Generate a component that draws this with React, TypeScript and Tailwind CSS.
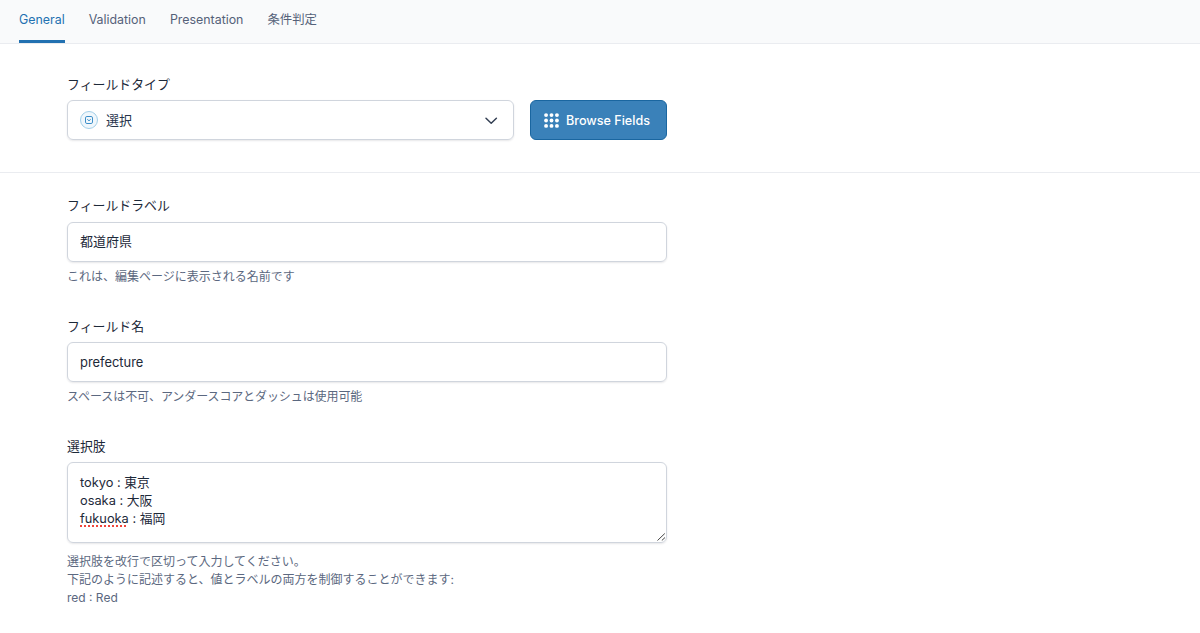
import { useState } from 'react';
import type { ReactNode } from 'react';

const TABS = ['General', 'Validation', 'Presentation', '条件判定'];

const DOTS = [2.2, 8, 13.8];

function Label({ children }: { children: ReactNode }) {
    return <div className="h-[18px] text-[12.9px] leading-[18px] text-[#1d2939]">{children}</div>;
}

function Hint({ children }: { children: ReactNode }) {
    return <div className="text-xs leading-[18px] text-[#5b6880]">{children}</div>;
}

function SelectFieldIcon() {
    return (
        <svg className="w-[18px] h-[18px] shrink-0" viewBox="0 0 18 18" fill="none">
            <circle cx="9" cy="9" r="8.5" fill="#f0f7fc" stroke="#a3cfe8" />
            <rect x="5.5" y="5.5" width="7" height="7" rx="1.4" stroke="#3d8fc9" />
            <path d="M7.3 8.3 9 9.8l1.7-1.5" stroke="#3d8fc9" />
        </svg>
    );
}

function GridIcon() {
    return (
        <svg className="w-[15px] h-[15px] shrink-0" viewBox="0 0 16 16" fill="white">
            {DOTS.map(y => DOTS.map(x => <circle key={`${x}-${y}`} cx={x} cy={y} r="2.05" />))}
        </svg>
    );
}

export default function App() {
    const [activeTab, setActiveTab] = useState('General');
    const [label, setLabel] = useState('都道府県');
    const [name, setName] = useState('prefecture');

    return (
        <div className="h-[633px] overflow-hidden bg-white font-['Inter','Noto_Sans_CJK_JP',sans-serif]">
            {/* Tabs */}
            <div className="flex h-11 gap-6 pl-[19px] bg-[#f9fafb] border-b border-[#eaecf0]">
                {TABS.map(tab => (
                    <button
                        key={tab}
                        type="button"
                        onClick={() => setActiveTab(tab)}
                        className={`h-[43px] pt-px border-b-3 text-[12.4px] whitespace-nowrap ${activeTab === tab ? 'text-[#2271b1] border-[#2271b1]' : 'text-[#556179] border-transparent'}`}
                    >
                        {tab}
                    </button>
                ))}
            </div>

            {/* Field type */}
            <div className="h-[129px] pl-[67px] pt-8 border-b border-[#eaecf0]">
                <Label>フィールドタイプ</Label>
                <div className="flex gap-4 mt-1.5">
                    <button type="button" className="flex items-center w-[446.5px] h-10 pl-3 pr-[13.5px] border border-[#d0d5dd] rounded-md shadow-[0_1px_2px_rgba(16,24,40,0.1)] text-[13px] text-[#344054]">
                        <SelectFieldIcon />
                        <span className="ml-2 pt-0.5 text-[#27344c]">選択</span>
                        <svg className="w-4 h-4 ml-auto" viewBox="0 0 16 16" fill="none" stroke="#344054" strokeWidth="1.5" strokeLinecap="round" strokeLinejoin="round">
                            <path d="m3 6.2 5.2 5 5.2-5" />
                        </svg>
                    </button>
                    <button type="button" className="flex items-center gap-[7px] w-[137.5px] h-10 pl-[13.5px] bg-[#3a81b9] border border-[#1a66a0] rounded-md text-[12.6px] font-medium text-white whitespace-nowrap">
                        <GridIcon />
                        <span className="pt-0.5">Browse Fields</span>
                    </button>
                </div>
            </div>

            <div className="w-[667px] pl-[67px] pt-6">
                {/* Field label */}
                <Label>フィールドラベル</Label>
                <input
                    value={label}
                    onChange={e => setLabel(e.target.value)}
                    className="block w-full h-10 mt-[7px] mb-[6px] px-3 pb-[3px] border border-[#d0d5dd] rounded-md shadow-[0_1px_2px_rgba(16,24,40,0.1)] text-[13px] text-[#1d2939] outline-none"
                />
                <Hint>これは、編集ページに表示される名前です</Hint>

                {/* Field name */}
                <div className="mt-8">
                    <Label>フィールド名</Label>
                </div>
                <input
                    value={name}
                    onChange={e => setName(e.target.value)}
                    className="block w-full h-10 mt-[6px] mb-[6px] px-3 border border-[#d0d5dd] rounded-md shadow-[0_1px_2px_rgba(16,24,40,0.1)] text-[12.9px] text-[#1d2939] outline-none"
                />
                <div className="tracking-[-0.08px]">
                    <Hint>スペースは不可、アンダースコアとダッシュは使用可能</Hint>
                </div>

                {/* Choices */}
                <div className="mt-8">
                    <Label>選択肢</Label>
                </div>
                <div className="relative h-[81px] mt-[6px] mb-[10px] px-3 py-[11px] border border-[#d0d5dd] rounded-md shadow-[0_1px_2px_rgba(16,24,40,0.1)] text-[12.8px] leading-[18px] text-[#1d2939]">
                    <div className="h-[18px]">tokyo : 東京</div>
                    <div className="h-[18px]">osaka : 大阪</div>
                    <div className="h-[18px]">
                        <span className="underline decoration-dotted decoration-[#f0443a] decoration-2 underline-offset-2 [text-decoration-skip-ink:none]">fukuoka</span> : 福岡
                    </div>
                    <svg className="absolute right-0 bottom-px w-[9px] h-[8px]" viewBox="0 0 9 8" stroke="#444" fill="none">
                        <path d="M.5 7.5 7.8.5M4.8 7.5 8 4.5" />
                    </svg>
                </div>
                <Hint>
                    選択肢を改行で区切って入力してください。
                    <br />
                    下記のように記述すると、値とラベルの両方を制御することができます:
                    <br />
                    red : Red
                </Hint>
            </div>
        </div>
    );
}
